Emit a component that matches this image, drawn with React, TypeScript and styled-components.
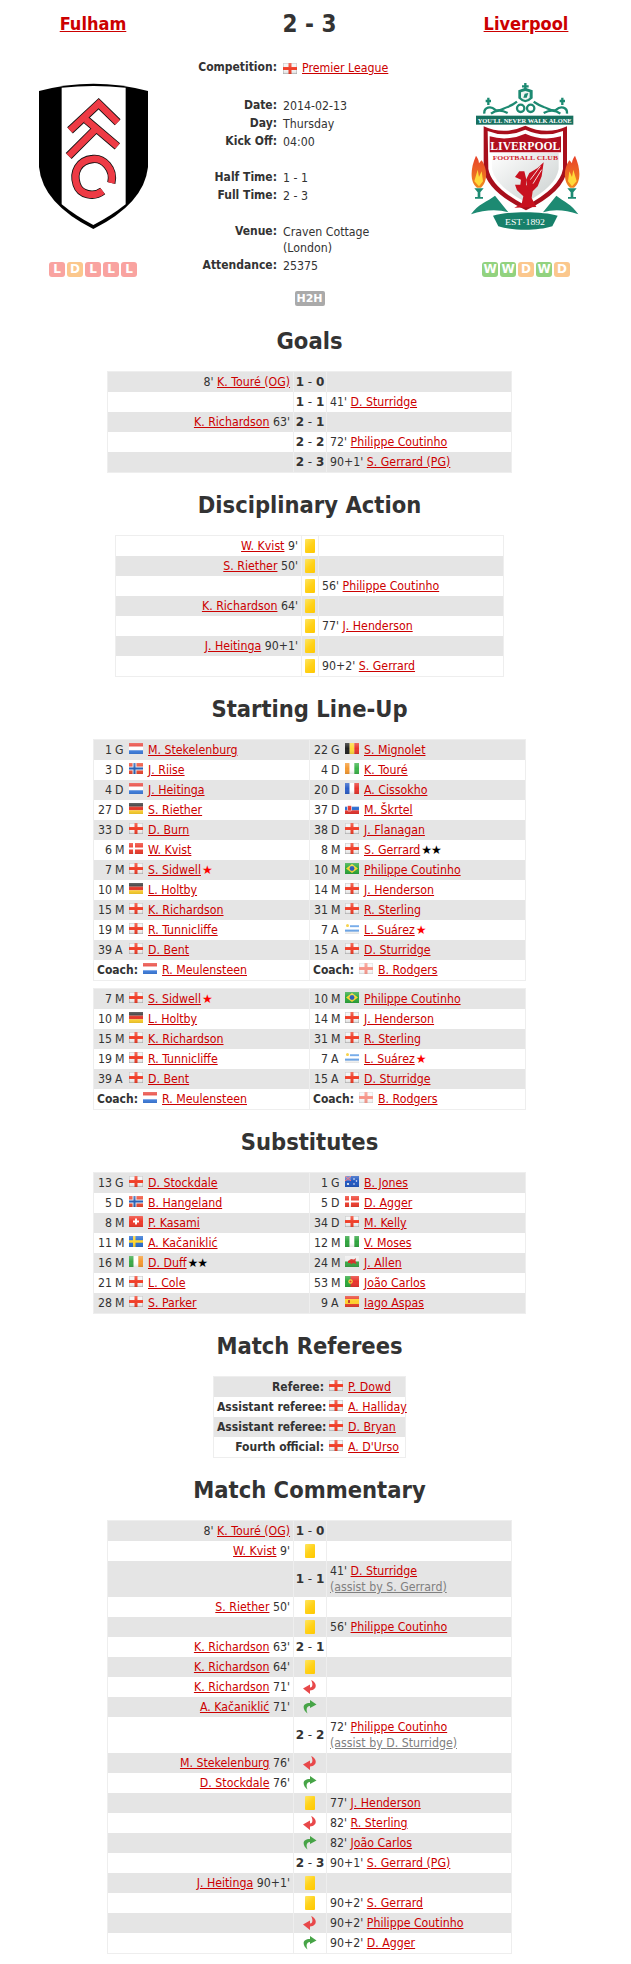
import React from 'react';
import styled, { createGlobalStyle } from 'styled-components';

const Global = createGlobalStyle`
  html, body { margin: 0; padding: 0; background: #fff; }
  body { font-family: "DejaVu Sans Condensed", "DejaVu Sans", sans-serif; font-size: 12.25px; line-height: 16px; color: #333; }
`;

const Page = styled.div`width: 619px;`;

const Header = styled.div`
  display: grid;
  grid-template-columns: 186px 247px 186px;
  height: 309px;
`;
const TeamColumn = styled.div`
  display: flex; flex-direction: column; align-items: center;
`;
const TeamName = styled.a`
  margin-top: 11px;
  height: 26px;
  line-height: 26px;
  font-size: 18px;
  font-weight: bold;
  color: #c00;
  text-decoration: underline;
`;
const CrestBox = styled.div`
  margin-top: 46px;
  width: 110px;
  height: 148px;
  display: flex;
  justify-content: center;
  svg { display: block; }
`;
const Form = styled.div`
  margin-top: 31px;
  display: flex;
  gap: 2px;
`;
const FormBadge = styled.span<{ $r: string }>`
  width: 16px; height: 15px;
  border-radius: 3px;
  background: ${p => (p.$r === 'L' ? '#f9a3a0' : p.$r === 'D' ? '#fbc78d' : '#92d27f')};
  color: #fff;
  font-family: "DejaVu Sans", sans-serif;
  font-weight: bold;
  font-size: 12px;
  line-height: 15px;
  text-align: center;
`;
const CenterColumn = styled.div`
  display: flex; flex-direction: column; align-items: stretch;
`;
const Score = styled.div`
  margin-top: 8px;
  height: 32px;
  line-height: 32px;
  font-size: 24px;
  font-weight: bold;
  text-align: center;
`;
const MetaRow = styled.div<{ $top?: number }>`
  display: grid;
  grid-template-columns: 91px 100px;
  column-gap: 6px;
  padding: 1px 0;
  margin-top: ${p => p.$top ?? 0}px;
`;
const MetaLabel = styled.div`
  font-size: 12px;
  font-weight: bold;
  text-align: right;
  white-space: nowrap;
  margin-top: -1px;
`;
const MetaValue = styled.div`
  display: flex; align-items: center; gap: 5px; white-space: nowrap;
`;
const MetaWrap = styled.div``;
const H2H = styled.span`
  align-self: center;
  margin-top: 16px;
  width: 30px; height: 15px;
  border-radius: 2px;
  background: #aaa;
  color: #fff;
  font-family: "DejaVu Sans", sans-serif;
  font-weight: bold;
  font-size: 11px;
  line-height: 15px;
  text-align: center;
`;
const Heading = styled.h2`
  margin: 17px 0 15px;
  height: 30px;
  line-height: 30px;
  font-size: 23.5px;
  font-weight: bold;
  text-align: center;
  color: #333;
`;
const Table = styled.table<{ $w: number; $stripe?: 'odd' | 'even'; $mt?: number; $mb?: number }>`
  width: ${p => p.$w}px;
  margin: ${p => p.$mt ?? 0}px auto ${p => p.$mb ?? 0}px;
  table-layout: fixed;
  border-collapse: separate;
  border-spacing: 0;
  border: 1px solid #eee;
  tr:nth-child(${p => p.$stripe ?? 'odd'}) td { background: #e5e5e5; }
`;
const Cell = styled.td<{ $w?: number; $h?: number; $align?: string; $divider?: boolean }>`
  ${p => (p.$w ? `width: ${p.$w}px;` : '')}
  height: ${p => p.$h ?? 20}px;
  padding: 0 3px;
  box-sizing: border-box;
  text-align: ${p => p.$align ?? 'left'};
  vertical-align: middle;
  white-space: nowrap;
  ${p => (p.$divider ? 'border-left: 1px solid #eee;' : '')}
`;
const IconCell = styled(Cell)`
  padding: 0;
  text-align: center;
  svg { display: block; margin: 0 auto; }
`;
const PlayerLink = styled.a`
  color: #c00;
  text-decoration: underline;
`;
const Assist = styled.a`
  display: block;
  color: #808080;
  text-decoration: underline;
`;
const ScoreText = styled.span`
  font-family: "DejaVu Sans", sans-serif;
  font-size: 12px;
  font-weight: normal;
  b { font-weight: bold; }
`;
const Card = styled.div`
  width: 10px; height: 14px;
  margin: 0 auto;
  border-radius: 1px;
  background: linear-gradient(135deg, #ffe660 0%, #ffd21a 50%, #ffc800 100%);
`;
const Side = styled.div`
  display: flex;
  align-items: center;
`;
const Num = styled.span`
  width: 27px;
  flex: none;
  display: grid;
  grid-template-columns: 15px auto;
  column-gap: 3px;
  white-space: pre;
`;
const NumValue = styled.span`
  text-align: right;
`;
const CoachLabel = styled.strong`
  flex: none;
  font-size: 12px;
  margin-right: 5px;
`;
const FlagBox = styled.span<{ $pale?: boolean }>`
  flex: none;
  width: 14px;
  height: 11px;
  margin: -3px 5px 0;
  display: block;
  opacity: ${p => (p.$pale ? 0.55 : 1)};
  svg { display: block; }
`;
const CoachFlag = styled(FlagBox)`
  margin-left: 0;
`;
const StarMark = styled.span<{ $c: string }>`
  color: ${p => p.$c};
  font-family: "DejaVu Sans", sans-serif;
  font-size: 12px;
  margin-left: 1px;
  letter-spacing: -1px;
`;
const RefLabel = styled.strong`
  display: block;
  font-size: 12px;
  font-weight: bold;
  text-align: right;
`;
const RefValue = styled(Side)``;
const RefFlag = styled(FlagBox)`
  margin-left: -1px;
`;

type FlagCode = 'eng' | 'nl' | 'no' | 'de' | 'dk' | 'be' | 'ci' | 'fr' | 'sk' | 'br' | 'uy' | 'au' | 'ch' | 'se' | 'ie' | 'ng' | 'wal' | 'pt' | 'es';

const Bars = ({ c, v }: { c: string[]; v?: boolean }) => (
  <>
    {c.map((col, i) =>
      v ? (
        <rect key={i} x={(14 / c.length) * i} y="0" width={14 / c.length} height="11" fill={col} />
      ) : (
        <rect key={i} x="0" y={(11 / c.length) * i} width="14" height={11 / c.length} fill={col} />
      )
    )}
  </>
);
const flagArt: Record<FlagCode, React.ReactNode> = {
  eng: (<><rect width="14" height="11" fill="#f4f4f4" /><rect x=".3" y=".3" width="13.4" height="10.4" fill="none" stroke="#bbb" strokeWidth=".6" /><rect x="5.5" width="3" height="11" fill="#f0402a" /><rect y="4" width="14" height="3" fill="#f0402a" /></>),
  nl: <Bars c={['#e8453c', '#fff', '#3f7fe0']} />,
  no: (<><rect width="14" height="11" fill="#ee4a32" /><rect x="3.5" width="4" height="11" fill="#dfe8f5" /><rect y="3.5" width="14" height="4" fill="#dfe8f5" /><rect x="4.5" width="2" height="11" fill="#2b62b5" /><rect y="4.5" width="14" height="2" fill="#2b62b5" /></>),
  de: <Bars c={['#333', '#e33a2c', '#ffd22e']} />,
  dk: (<><rect width="14" height="11" fill="#ee3d2e" /><rect x="4" width="2" height="11" fill="#fff" /><rect y="4.5" width="14" height="2" fill="#fff" /></>),
  be: <Bars v c={['#222', '#ffd83a', '#e8352e']} />,
  ci: <Bars v c={['#f59a32', '#fff', '#3cb44a']} />,
  fr: <Bars v c={['#2c5fc8', '#fff', '#e8352e']} />,
  sk: (<><Bars c={['#fff', '#2f6fd0', '#e8352e']} /><rect x="2.5" y="2.5" width="4" height="5.5" rx="1" fill="#e8352e" stroke="#fff" strokeWidth=".6" /></>),
  br: (<><rect width="14" height="11" fill="#2da83c" /><polygon points="7,1 13,5.5 7,10 1,5.5" fill="#f7d634" /><circle cx="7" cy="5.5" r="2.4" fill="#2a5bb8" /></>),
  uy: (<><Bars c={['#fff', '#6ba5e8', '#fff', '#6ba5e8', '#fff']} /><rect width="5" height="5" fill="#fff" /><circle cx="2.5" cy="2.5" r="1.5" fill="#f5cc30" /></>),
  au: (<><rect width="14" height="11" fill="#2258c0" /><rect width="6" height="5" fill="#5577cc" /><path d="M0 0L6 5M6 0L0 5" stroke="#f66" strokeWidth="1" /><circle cx="9" cy="3" r=".8" fill="#fff" /><circle cx="11.5" cy="5" r=".8" fill="#fff" /><circle cx="9" cy="8" r=".8" fill="#fff" /><circle cx="3" cy="8" r="1.1" fill="#fff" /></>),
  ch: (<><rect width="14" height="11" rx=".5" fill="#ee3a2b" /><rect x="6" y="2.5" width="2" height="6" fill="#fff" /><rect x="4" y="4.5" width="6" height="2" fill="#fff" /></>),
  se: (<><rect width="14" height="11" fill="#2a6fd0" /><rect x="4" width="2.5" height="11" fill="#ffd62e" /><rect y="4.2" width="14" height="2.5" fill="#ffd62e" /></>),
  ie: <Bars v c={['#3caa48', '#fff', '#f59a32']} />,
  ng: <Bars v c={['#2fa53f', '#fff', '#2fa53f']} />,
  wal: (<><rect width="14" height="5.5" fill="#eee" /><rect y="5.5" width="14" height="5.5" fill="#3aa645" /><path d="M3 5L6 3L9 3.5L11 2L10.5 5L11.5 8L8 7L6 8.5L5.5 7L3 7Z" fill="#d9322b" /></>),
  pt: (<><rect width="14" height="11" fill="#e8352e" /><rect width="5.5" height="11" fill="#2da83c" /><circle cx="5.5" cy="5.5" r="2.2" fill="#f5d23a" /><circle cx="5.5" cy="5.5" r="1.1" fill="#e8352e" /></>),
  es: (<><rect width="14" height="11" fill="#e8402e" /><rect y="3" width="14" height="5" fill="#ffd02e" /><rect x="3" y="4" width="2" height="3" fill="#c8402a" /></>),
};
const Gloss = () => (
  <>
    <defs>
      <linearGradient id="gloss" x1="0" y1="0" x2="0" y2="1">
        <stop offset="0" stopColor="#fff" stopOpacity=".25" />
        <stop offset=".5" stopColor="#fff" stopOpacity="0" />
        <stop offset="1" stopColor="#000" stopOpacity=".12" />
      </linearGradient>
    </defs>
    <rect width="14" height="11" fill="url(#gloss)" />
  </>
);
const FlagSvg = styled.svg`
  flex: none;
`;
const FlagArt = ({ c }: { c: FlagCode }) => (
  <FlagSvg width="14" height="11" viewBox="0 0 14 11">
    {flagArt[c]}
    <Gloss />
  </FlagSvg>
);

const ffc = 'M150 180L236 100L293 156M146 257L226 177M198 148L292 228M274 338C284 296 250 262 218 266C176 270 158 306 170 342C180 374 222 382 248 362';
const FulhamCrest = () => (
  <svg width="109" height="146" viewBox="57 38 327 438">
    <path d="M57 62Q220 18 384 62L384 290Q372 400 220 476Q68 400 57 290Z" fill="#000" />
    <path d="M125 52Q220 42 317 52L317 402Q272 438 220 464Q168 438 125 402Z" fill="#fff" />
    <path d={ffc} fill="none" stroke="#111" strokeWidth="25" />
    <path d={ffc} fill="none" stroke="#ee3b45" strokeWidth="20" />
  </svg>
);

const LiverpoolCrest = () => (
  <svg width="110" height="148" viewBox="40 40 330 444">
    <defs>
      <linearGradient id="lfcfield" x1="0" y1="0" x2="1" y2="1">
        <stop offset="0" stopColor="#fff" />
        <stop offset="1" stopColor="#c9cfce" />
      </linearGradient>
      <linearGradient id="flame" x1="0" y1="0" x2="0" y2="1">
        <stop offset="0" stopColor="#e8402a" />
        <stop offset="1" stopColor="#f08a1e" />
      </linearGradient>
    </defs>
    <g fill="none" stroke="#1d8a72" strokeWidth="7">
      <path d="M203 40V62M193 50H213M92 84V106M84 94H100M314 84V106M306 94H322" />
      <path d="M80 132C78 112 100 108 112 120C122 128 136 116 150 112C160 108 168 104 178 96" />
      <path d="M328 132C330 112 308 108 296 120C286 128 272 116 258 112C248 108 240 104 228 96" />
      <circle cx="189" cy="116" r="11" />
      <circle cx="219" cy="116" r="11" />
      <path d="M100 132C115 120 135 122 150 130M308 132C293 120 273 122 258 130" />
    </g>
    <path d="M182 62L203 54L225 62V86Q215 96 203 98Q191 96 182 86Z" fill="#1d8a72" />
    <path d="M190 68L203 64L216 68V84Q210 90 203 91Q196 90 190 84Z" fill="#eef5f2" />
    <path d="M197 84L201 72L212 70L207 84Z" fill="#1d8a72" />
    <rect x="55" y="138" width="292" height="27" fill="#17705f" />
    <text x="201" y="159" fill="#fff" fontFamily="'Liberation Serif', serif" fontSize="20" fontWeight="bold" textAnchor="middle" textLength="282" lengthAdjust="spacingAndGlyphs">YOU'LL NEVER WALK ALONE</text>
    <path d="M78 170Q140 198 203 168Q266 198 328 170V300Q320 365 205 422Q88 365 78 300Z" fill="#a80f1c" />
    <path d="M90 184Q145 206 203 180Q261 206 316 184V298Q306 355 205 408Q102 355 92 298Z" fill="#fff" />
    <path d="M96 200Q150 216 203 192Q256 216 310 200V248H96Z" fill="#b01020" />
    <path d="M103 250H303V298Q295 350 205 398Q113 350 103 298Z" fill="url(#lfcfield)" />
    <text x="203" y="242" fill="#fff" fontFamily="'Liberation Serif', serif" fontSize="40" fontWeight="bold" textAnchor="middle" textLength="210" lengthAdjust="spacingAndGlyphs">LIVERPOOL</text>
    <text x="203" y="272" fill="#d41f2e" fontFamily="'Liberation Serif', serif" fontSize="20" fontWeight="bold" textAnchor="middle" textLength="196" lengthAdjust="spacingAndGlyphs">FOOTBALL CLUB</text>
    <path d="M172 322L185 305L200 305L205 325L205 345L225 365L222 385L236 412L170 414L192 402L197 380L178 362L172 345L188 345L190 330Z" fill="#c8111f" />
    <path d="M205 330L215 310L240 295L258 278L252 320L240 350L225 365L210 360Z" fill="#c8111f" />
    <path d="M218 330L248 290M226 342L252 300" stroke="#f3d9d9" strokeWidth="3" fill="none" />
    <g fill="url(#flame)">
      <path d="M55 258C72 282 56 288 72 272C92 300 88 340 70 354H58C38 340 36 300 55 258Z" />
      <path d="M352 258C335 282 351 288 335 272C315 300 319 340 337 354H349C369 340 371 300 352 258Z" />
    </g>
    <path d="M60 300L64 322L72 305L76 335L64 350L50 335Z" fill="#ffd93a" />
    <path d="M347 300L343 322L335 305L331 335L343 350L357 335Z" fill="#ffd93a" />
    <path d="M50 356H78L68 368V382H76V387H52V382H60V368ZM329 356H357L347 368V382H355V387H331V382H339V368Z" fill="#1d8a72" />
    <path d="M40 434C60 404 90 395 112 378L152 428C120 418 80 420 40 434Z" fill="#1d8a72" />
    <path d="M362 434C342 404 318 395 296 378L256 428C288 418 322 420 362 434Z" fill="#1d8a72" />
    <path d="M106 438C150 424 256 424 300 438L284 470C240 484 166 484 122 470Z" fill="#17806a" />
    <text x="202" y="465" fill="#fff" fontFamily="'Liberation Serif', serif" fontSize="25" textAnchor="middle" textLength="120" lengthAdjust="spacingAndGlyphs">EST·1892</text>
  </svg>
);

const SubOff = () => (
  <svg width="14" height="14" viewBox="0 0 14 14">
    <path d="M8 0C14 2 15 10 7 10.5L7 14L0 8.5L7 4.5L7 7.5C10 7.5 10 3 8 0Z" fill="#e8484a" />
  </svg>
);
const SubOn = () => (
  <svg width="14" height="14" viewBox="0 0 14 14">
    <path d="M4.5 13.5C-1 9 -1 3 7 3L7 0L13.5 4.5L7 8L7 6C4 6 2.5 9 4.5 13.5Z" fill="#47a447" />
  </svg>
);

const ScoreValue = ({ s }: { s: string }) => {
  const [a, b] = s.split('-');
  return (
    <ScoreText>
      <b>{a}</b> - <b>{b}</b>
    </ScoreText>
  );
};

type Event = {
  side: 'L' | 'R';
  min: string;
  name: string;
  assist?: string;
  mark: 'card' | 'off' | 'on' | string;
};

const EventMark = ({ mark }: { mark: string }) => {
  if (mark === 'card') return <Card />;
  if (mark === 'off') return <SubOff />;
  if (mark === 'on') return <SubOn />;
  return <ScoreValue s={mark} />;
};

const EventTable = ({ w, left, mid, rows, stripe }: { w: number; left: number; mid: number; rows: Event[]; stripe?: 'odd' | 'even' }) => (
  <Table $w={w} $stripe={stripe}>
    <tbody>
      {rows.map((r, i) => (
        <tr key={i}>
          <Cell $w={left} $h={r.assist ? 36 : 20} $align="right">
            {r.side === 'L' &&
              (r.name.includes('OG') ? (
                <>{r.min}' <PlayerLink>{r.name}</PlayerLink></>
              ) : (
                <><PlayerLink>{r.name}</PlayerLink> {r.min}'</>
              ))}
          </Cell>
          <IconCell $w={mid} $divider>
            <EventMark mark={r.mark} />
          </IconCell>
          <Cell $divider>
            {r.side === 'R' && (
              <>
                {r.min}' <PlayerLink>{r.name}</PlayerLink>
                {r.assist && <Assist>(assist by {r.assist})</Assist>}
              </>
            )}
          </Cell>
        </tr>
      ))}
    </tbody>
  </Table>
);

const goals: Event[] = [
  { side: 'L', min: '8', name: 'K. Touré (OG)', mark: '1-0' },
  { side: 'R', min: '41', name: 'D. Sturridge', mark: '1-1' },
  { side: 'L', min: '63', name: 'K. Richardson', mark: '2-1' },
  { side: 'R', min: '72', name: 'Philippe Coutinho', mark: '2-2' },
  { side: 'R', min: '90+1', name: 'S. Gerrard (PG)', mark: '2-3' },
];
const cards: Event[] = [
  { side: 'L', min: '9', name: 'W. Kvist', mark: 'card' },
  { side: 'L', min: '50', name: 'S. Riether', mark: 'card' },
  { side: 'R', min: '56', name: 'Philippe Coutinho', mark: 'card' },
  { side: 'L', min: '64', name: 'K. Richardson', mark: 'card' },
  { side: 'R', min: '77', name: 'J. Henderson', mark: 'card' },
  { side: 'L', min: '90+1', name: 'J. Heitinga', mark: 'card' },
  { side: 'R', min: '90+2', name: 'S. Gerrard', mark: 'card' },
];
const commentary: Event[] = [
  { side: 'L', min: '8', name: 'K. Touré (OG)', mark: '1-0' },
  { side: 'L', min: '9', name: 'W. Kvist', mark: 'card' },
  { side: 'R', min: '41', name: 'D. Sturridge', assist: 'S. Gerrard', mark: '1-1' },
  { side: 'L', min: '50', name: 'S. Riether', mark: 'card' },
  { side: 'R', min: '56', name: 'Philippe Coutinho', mark: 'card' },
  { side: 'L', min: '63', name: 'K. Richardson', mark: '2-1' },
  { side: 'L', min: '64', name: 'K. Richardson', mark: 'card' },
  { side: 'L', min: '71', name: 'K. Richardson', mark: 'off' },
  { side: 'L', min: '71', name: 'A. Kačaniklić', mark: 'on' },
  { side: 'R', min: '72', name: 'Philippe Coutinho', assist: 'D. Sturridge', mark: '2-2' },
  { side: 'L', min: '76', name: 'M. Stekelenburg', mark: 'off' },
  { side: 'L', min: '76', name: 'D. Stockdale', mark: 'on' },
  { side: 'R', min: '77', name: 'J. Henderson', mark: 'card' },
  { side: 'R', min: '82', name: 'R. Sterling', mark: 'off' },
  { side: 'R', min: '82', name: 'João Carlos', mark: 'on' },
  { side: 'R', min: '90+1', name: 'S. Gerrard (PG)', mark: '2-3' },
  { side: 'L', min: '90+1', name: 'J. Heitinga', mark: 'card' },
  { side: 'R', min: '90+2', name: 'S. Gerrard', mark: 'card' },
  { side: 'R', min: '90+2', name: 'Philippe Coutinho', mark: 'off' },
  { side: 'R', min: '90+2', name: 'D. Agger', mark: 'on' },
];

type P = [string, string, FlagCode, string, ('r' | 'bb' | undefined)?];
type Coach = [FlagCode, string, boolean?];

const Player = ({ p }: { p: P }) => (
  <Side>
    <Num>
      <NumValue>{p[0]}</NumValue>
      <span>{p[1]}</span>
    </Num>
    <FlagBox><FlagArt c={p[2]} /></FlagBox>
    <PlayerLink>{p[3]}</PlayerLink>
    {p[4] === 'r' && <StarMark $c="#f00">★</StarMark>}
    {p[4] === 'bb' && <StarMark $c="#000">★★</StarMark>}
  </Side>
);
const CoachEntry = ({ c }: { c: Coach }) => (
  <Side>
    <CoachLabel>Coach:</CoachLabel>
    <CoachFlag $pale={c[2]}><FlagArt c={c[0]} /></CoachFlag>
    <PlayerLink>{c[1]}</PlayerLink>
  </Side>
);

const LineupTable = ({ left, right, coach, mt, mb, firstH }: { left: P[]; right: P[]; coach?: [Coach, Coach]; mt?: number; mb?: number; firstH?: number }) => (
  <Table $w={433} $mt={mt} $mb={mb}>
    <tbody>
      {left.map((p, i) => (
        <tr key={i}>
          <Cell $w={215} $h={i === 0 ? firstH : 20}><Player p={p} /></Cell>
          <Cell $divider><Player p={right[i]} /></Cell>
        </tr>
      ))}
      {coach && (
        <tr>
          <Cell $w={215}><CoachEntry c={coach[0]} /></Cell>
          <Cell $divider><CoachEntry c={coach[1]} /></Cell>
        </tr>
      )}
    </tbody>
  </Table>
);

const startL: P[] = [
  ['1', 'G', 'nl', 'M. Stekelenburg'], ['3', 'D', 'no', 'J. Riise'], ['4', 'D', 'nl', 'J. Heitinga'], ['27', 'D', 'de', 'S. Riether'],
  ['33', 'D', 'eng', 'D. Burn'], ['6', 'M', 'dk', 'W. Kvist'], ['7', 'M', 'eng', 'S. Sidwell', 'r'], ['10', 'M', 'de', 'L. Holtby'],
  ['15', 'M', 'eng', 'K. Richardson'], ['19', 'M', 'eng', 'R. Tunnicliffe'], ['39', 'A', 'eng', 'D. Bent'],
];
const startR: P[] = [
  ['22', 'G', 'be', 'S. Mignolet'], ['4', 'D', 'ci', 'K. Touré'], ['20', 'D', 'fr', 'A. Cissokho'], ['37', 'D', 'sk', 'M. Škrtel'],
  ['38', 'D', 'eng', 'J. Flanagan'], ['8', 'M', 'eng', 'S. Gerrard', 'bb'], ['10', 'M', 'br', 'Philippe Coutinho'], ['14', 'M', 'eng', 'J. Henderson'],
  ['31', 'M', 'eng', 'R. Sterling'], ['7', 'A', 'uy', 'L. Suárez', 'r'], ['15', 'A', 'eng', 'D. Sturridge'],
];
const subsL: P[] = [
  ['13', 'G', 'eng', 'D. Stockdale'], ['5', 'D', 'no', 'B. Hangeland'], ['8', 'M', 'ch', 'P. Kasami'], ['11', 'M', 'se', 'A. Kačaniklić'],
  ['16', 'M', 'ie', 'D. Duff', 'bb'], ['21', 'M', 'eng', 'L. Cole'], ['28', 'M', 'eng', 'S. Parker'],
];
const subsR: P[] = [
  ['1', 'G', 'au', 'B. Jones'], ['5', 'D', 'dk', 'D. Agger'], ['34', 'D', 'eng', 'M. Kelly'], ['12', 'M', 'ng', 'V. Moses'],
  ['24', 'M', 'wal', 'J. Allen'], ['53', 'M', 'pt', 'João Carlos'], ['9', 'A', 'es', 'Iago Aspas'],
];
const coaches: [Coach, Coach] = [['nl', 'R. Meulensteen'], ['eng', 'B. Rodgers', true]];
const referees: [string, string][] = [
  ['Referee:', 'P. Dowd'], ['Assistant referee:', 'A. Halliday'], ['Assistant referee:', 'D. Bryan'], ['Fourth official:', "A. D'Urso"],
];
const meta: { label: string; top?: number; value: React.ReactNode }[] = [
  { label: 'Date:', top: 20, value: '2014-02-13' },
  { label: 'Day:', value: 'Thursday' },
  { label: 'Kick Off:', value: '04:00' },
  { label: 'Half Time:', top: 18, value: '1 - 1' },
  { label: 'Full Time:', value: '2 - 3' },
  { label: 'Venue:', top: 18, value: <MetaWrap>Craven Cottage<br />(London)</MetaWrap> },
  { label: 'Attendance:', value: '25375' },
];

export default function App() {
  return (
    <Page>
      <Global />
      <Header>
        <TeamColumn>
          <TeamName>Fulham</TeamName>
          <CrestBox><FulhamCrest /></CrestBox>
          <Form>{'LDLLL'.split('').map((r, i) => <FormBadge key={i} $r={r}>{r}</FormBadge>)}</Form>
        </TeamColumn>
        <CenterColumn>
          <Score>2 - 3</Score>
          <MetaRow $top={19}>
            <MetaLabel>Competition:</MetaLabel>
            <MetaValue>
              <FlagArt c="eng" />
              <PlayerLink>Premier League</PlayerLink>
            </MetaValue>
          </MetaRow>
          {meta.map(m => (
            <MetaRow key={m.label} $top={m.top}>
              <MetaLabel>{m.label}</MetaLabel>
              <MetaValue>{m.value}</MetaValue>
            </MetaRow>
          ))}
          <H2H>H2H</H2H>
        </CenterColumn>
        <TeamColumn>
          <TeamName>Liverpool</TeamName>
          <CrestBox><LiverpoolCrest /></CrestBox>
          <Form>{'WWDWD'.split('').map((r, i) => <FormBadge key={i} $r={r}>{r}</FormBadge>)}</Form>
        </TeamColumn>
      </Header>

      <Heading>Goals</Heading>
      <EventTable w={405} left={185} mid={33} rows={goals} />

      <Heading>Disciplinary Action</Heading>
      <EventTable w={389} left={185} mid={17} rows={cards} stripe="even" />

      <Heading>Starting Line-Up</Heading>
      <LineupTable left={startL} right={startR} coach={coaches} />
      <LineupTable left={startL.slice(6)} right={startR.slice(6)} coach={coaches} mt={7} mb={1} firstH={18} />

      <Heading>Substitutes</Heading>
      <LineupTable left={subsL} right={subsR} />

      <Heading>Match Referees</Heading>
      <Table $w={193}>
        <tbody>
          {referees.map(([label, name], i) => (
            <tr key={i}>
              <Cell $w={113}><RefLabel>{label}</RefLabel></Cell>
              <Cell>
                <RefValue>
                  <RefFlag><FlagArt c="eng" /></RefFlag>
                  <PlayerLink>{name}</PlayerLink>
                </RefValue>
              </Cell>
            </tr>
          ))}
        </tbody>
      </Table>

      <Heading>Match Commentary</Heading>
      <EventTable w={405} left={185} mid={33} rows={commentary} />
    </Page>
  );
}
